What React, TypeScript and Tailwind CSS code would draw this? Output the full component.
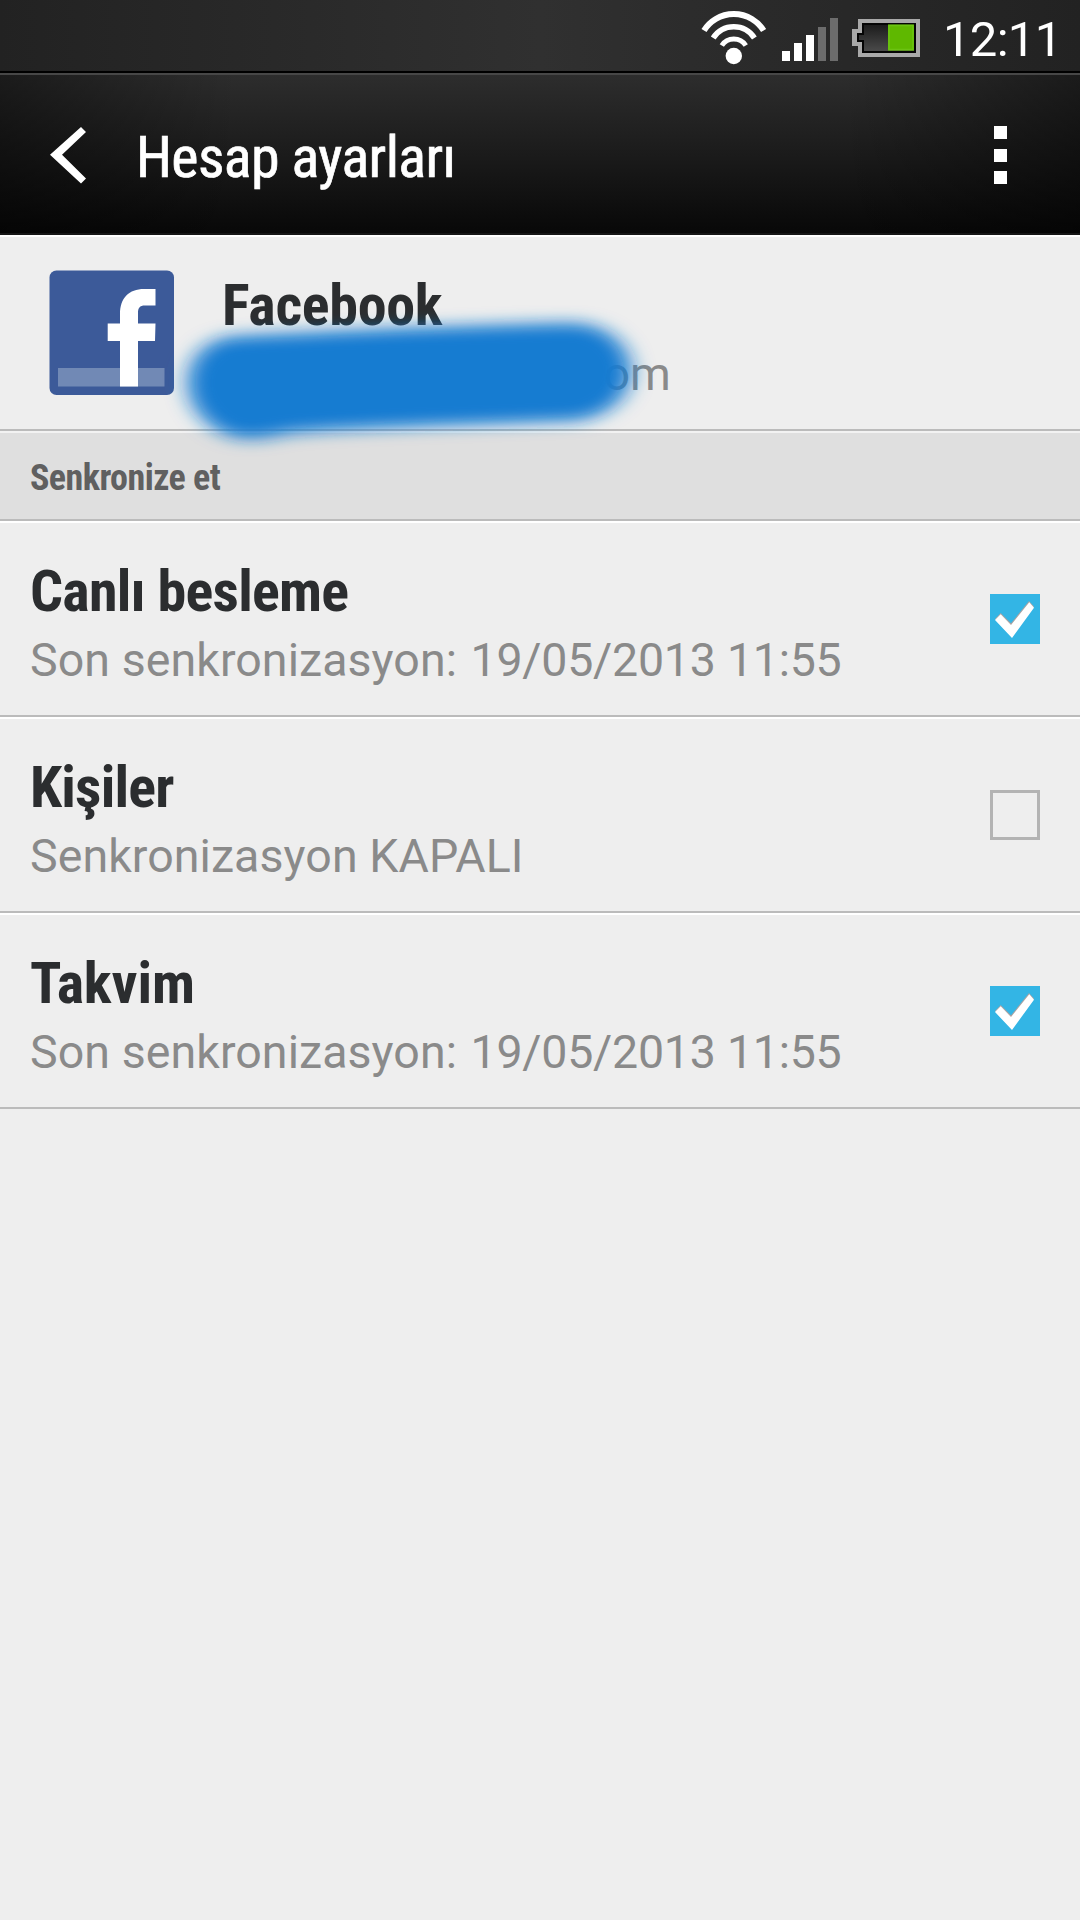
import React, { useState } from 'react';

interface SyncItem {
  title: string;
  summary: string;
  date?: string;
  checked: boolean;
  titleClass: string;
}

const initialItems: SyncItem[] = [
  {
    title: 'Canlı besleme',
    summary: 'Son senkronizasyon:',
    date: '19/05/2013 11:55',
    checked: true,
    titleClass: 'tracking-[-0.75px]',
  },
  { title: 'Kişiler', summary: 'Senkronizasyon KAPALI', checked: false, titleClass: 'tracking-[-0.8px]' },
  {
    title: 'Takvim',
    summary: 'Son senkronizasyon:',
    date: '19/05/2013 11:55',
    checked: true,
    titleClass: 'tracking-[-0.1px]',
  },
];

function StatusIcons() {
  return (
    <svg width="240" height="71" viewBox="0 0 240 71" fill="none">
      <defs>
        <linearGradient id="cell" x1="0" y1="0" x2="0" y2="1">
          <stop offset="0" stopColor="#1c1c1c" />
          <stop offset="1" stopColor="#4a4a4a" />
        </linearGradient>
      </defs>
      <g stroke="#fff">
        <path d="M24 30.5A35.2 35.2 0 0 1 83.6 30.5" strokeWidth="6" />
        <path d="M33.2 38A24.5 24.5 0 0 1 74.4 38" strokeWidth="5.6" />
        <path d="M41.8 45.5A14.3 14.3 0 0 1 65.8 45.5" strokeWidth="5" />
      </g>
      <circle cx="53.8" cy="56" r="8.2" fill="#fff" />
      <path d="M102 51h8v10h-8zM114 43h8v18h-8zM126 35h8v26h-8z" fill="#fff" />
      <path d="M138 27h8v34h-8zM150 18h8v43h-8z" fill="#6c6c6c" />
      <path d="M178 19H240V57H178V46H172V29H178Z" fill="#a9a9a9" />
      <path d="M182 23H236V53H182V42H177V33H182Z" fill="#050505" />
      <path d="M184 25H234V51H184V40H179V35H184Z" fill="url(#cell)" />
      <path d="M208 24.5h26v26h-26z" fill="#5fb800" />
      <path d="M209 25.5h24v24h-24z" stroke="#6cc312" strokeWidth="1.5" />
    </svg>
  );
}

function FacebookLogo() {
  return (
    <svg className="shrink-0" width="126" height="126" viewBox="-1 -1 126 126">
      <rect x="-0.5" y="-0.5" width="124.5" height="124.5" rx="7" fill="#3c5a99" />
      <path d="M8 97h106.5v18.5H8z" fill="#7189b5" />
      <path
        d="M70 115.5V70H57.7V52.5H70V43C70 27 79 18 94 18H105.5V34.5H95C89.5 34.5 88 37 88 42V52.5H105.5L105 70H88V115.5Z"
        fill="#fff"
      />
    </svg>
  );
}

function Scribble() {
  return (
    <svg className="absolute left-[140px] top-[68px]" width="560" height="160" viewBox="140 305 560 160">
      <defs>
        <filter id="soft" x="-20%" y="-40%" width="140%" height="180%">
          <feGaussianBlur stdDeviation="11 8" />
        </filter>
      </defs>
      <path
        d="M236 336C320 332 440 326 572 323C608 324 630 345 631 371C630 398 606 419 570 421C460 425 350 428 290 433C268 438 252 440 238 438C209 432 188 408 188 382C189 356 208 338 236 336Z"
        fill="#187bd1"
        filter="url(#soft)"
      />
    </svg>
  );
}

function Checkbox({ checked }: { checked: boolean }) {
  if (!checked) {
    return <span className="size-[50px] border-3 border-[#b3b3b3]" />;
  }
  return (
    <svg className="bg-[#33b5e5]" width="50" height="50" viewBox="0 0 50 50">
      <path d="M5 25L10.7 19L21 29.3L39 7L44 12.5L22 42.5Z" fill="#a9a3a3" />
      <path d="M5 26L10.7 20.3L21 31L39.3 8.3L44 13.7L22 44Z" fill="#fff" />
    </svg>
  );
}

function App() {
  const [items, setItems] = useState(initialItems);

  const toggle = (index: number) => {
    setItems(items.map((item, i) => (i === index ? { ...item, checked: !item.checked } : item)));
  };

  return (
    <div className="flex h-[1920px] w-[1080px] flex-col overflow-hidden bg-[#eeeeee] font-['Roboto',sans-serif]">
      <div className="flex h-[73px] items-start border-b-2 border-black bg-linear-to-r from-[#222222] via-[#303030] to-[#222222] pl-[680px]">
        <StatusIcons />
        <span className="ml-[23px] text-[49px] leading-[79px] tracking-[-0.7px] whitespace-nowrap text-white">
          12:11
        </span>
      </div>

      <header className="flex h-[162px] items-start border-t-2 border-b-2 border-t-[#474747] border-b-[#161616] bg-[linear-gradient(90deg,rgba(0,0,0,0.4),transparent_22%,transparent_78%,rgba(0,0,0,0.4)),linear-gradient(180deg,#2d2d2d,#1b1b1b_50%,#080808)]">
        <svg className="mt-[50px] ml-[48px]" width="40" height="60" viewBox="0 0 40 60">
          <path d="M2 29.7L33 2L38 7L14 29.7L38 53.5L33 58.5Z" fill="#fff" />
        </svg>
        <h1 className="mt-[50px] ml-[48px] text-[58px] leading-[64px] font-normal tracking-[-0.62px] whitespace-nowrap text-white font-stretch-75% [-webkit-text-stroke:0.7px_white]">
          Hesap ayarları
        </h1>
        <div className="mt-[51px] mr-[73px] ml-auto flex flex-col gap-[9.5px]">
          <span className="size-[13px] bg-white" />
          <span className="size-[13px] bg-white" />
          <span className="size-[13px] bg-white" />
        </div>
      </header>

      <section className="relative flex h-[196px] border-t-2 border-b-2 border-t-white border-b-[#bbbbbb] pt-[33px] pl-[49px]">
        <FacebookLogo />
        <div className="ml-[47px] flex w-[449px] flex-col pt-[3px]">
          <span className="text-[58px] leading-[64px] font-bold tracking-[-0.3px] text-[#2b2d2f] font-stretch-75%">
            Facebook
          </span>
          <span className="mt-[7px] text-right text-[46.5px] leading-[60px] tracking-[0.1px] text-[#8a8a8a]">.com</span>
        </div>
        <Scribble />
      </section>

      <h2 className="h-[90px] border-t-2 border-b-2 border-t-[#f2f2f2] border-b-[#bbbbbb] bg-[#dfdfdf] pl-[30px] text-[36px] leading-[91px] font-bold tracking-[-0.55px] text-[#606060] font-stretch-75%">
        Senkronize et
      </h2>

      <ul>
        {items.map((item, index) => (
          <li
            key={item.title}
            className="flex h-[196px] items-center justify-between border-t-2 border-b-2 border-t-white border-b-[#bbbbbb] pr-[40px] pl-[30px]"
            onClick={() => toggle(index)}
          >
            <div className="flex h-full flex-col pt-[36px]">
              <span className={`text-[58px] leading-[64px] font-bold text-[#2b2d2f] font-stretch-75% ${item.titleClass}`}>
                {item.title}
              </span>
              <span className="mt-[7px] text-[46.5px] leading-[60px] tracking-[0.08px] whitespace-nowrap text-[#8a8a8a]">
                {item.summary}
                {item.date && <span className="ml-[13.5px] tracking-[-0.24px]">{item.date}</span>}
              </span>
            </div>
            <Checkbox checked={item.checked} />
          </li>
        ))}
      </ul>
    </div>
  );
}

export default App;
